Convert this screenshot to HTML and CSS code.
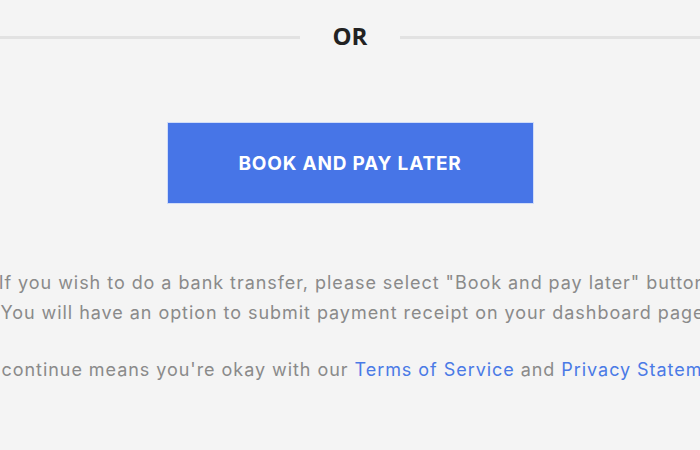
FILE: index.html
```html
<!DOCTYPE html>
<html>
<head>
<meta charset="utf-8">
<link rel="stylesheet" href="styles.css">
</head>
<body>
<div class="page">
  <div class="divider">
    <span class="line"></span>
    <span class="or">OR</span>
    <span class="line"></span>
  </div>
  <div class="action">
    <button class="btn">BOOK AND PAY LATER</button>
  </div>
  <div class="notes">
    <p class="note">If you wish to do a bank transfer, please select "Book and pay later" button.<br>You will have an option to submit payment receipt on your dashboard page.</p>
    <p class="note">To continue means you're okay with our <a href="#" class="link">Terms of Service</a> and <a href="#" class="link">Privacy Statement</a>.</p>
  </div>
</div>
</body>
</html>
```

FILE: styles.css
```css
html, body {
  margin: 0;
  padding: 0;
  background: #f4f4f4;
  overflow: hidden;
}
.page {
  width: 700px;
  height: 450px;
  display: flex;
  flex-direction: column;
  align-items: center;
}
.divider {
  width: 700px;
  display: flex;
  align-items: center;
  gap: 30px;
  margin-top: 20px;
  height: 32px;
}
.line {
  flex: 1;
  height: 3px;
  background: #e2e2e2;
  margin-top: 3px;
}
.or {
  font-family: "Open Sans", sans-serif;
  font-weight: 700;
  font-size: 24px;
  line-height: 32px;
  color: #222;
  width: 40px;
  text-align: center;
}
.action {
  margin-top: 70px;
}
.btn {
  width: 367px;
  height: 82px;
  background: #4775e7;
  border: 1px solid #d0dcf8;
  color: #fff;
  font-family: "Inter", sans-serif;
  font-weight: 700;
  font-size: 19px;
  letter-spacing: 0.8px;
  padding: 0;
  cursor: pointer;
}
.notes {
  width: 900px;
  margin-top: 64px;
  margin-left: 11px;
  text-align: center;
  font-family: "Inter", sans-serif;
  font-size: 18px;
  letter-spacing: 0.95px;
  line-height: 30px;
  color: #8a8a8a;
}
.note {
  margin: 0 0 27px;
}
.link {
  color: #4a7ae6;
  text-decoration: none;
}
```
